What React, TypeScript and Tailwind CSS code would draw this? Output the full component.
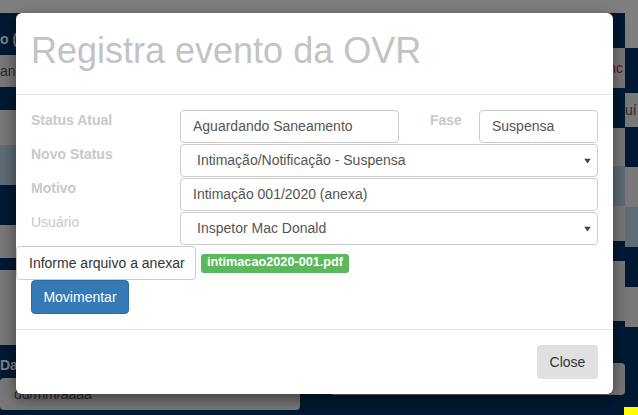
import { ReactNode } from "react";

const font = "font-['Liberation_Sans',Arial,sans-serif]";

function Arrow() {
  return (
    <svg width="7" height="5" viewBox="0 0 7 5" className="absolute right-[6px] top-1/2 -translate-y-1/2">
      <path d="M0 0 L7 0 L3.5 5 Z" fill="#444" />
    </svg>
  );
}

function Field({ children, select, className = "" }: { children: ReactNode; select?: boolean; className?: string }) {
  return (
    <div
      className={`relative flex h-[33px] items-center whitespace-nowrap rounded border border-[#ccc] bg-white text-[14px] text-[#555] ${
        select ? "pl-4" : "pl-3"
      } ${className}`}
    >
      {children}
      {select && <Arrow />}
    </div>
  );
}

function Label({ children, bold = true }: { children: ReactNode; bold?: boolean }) {
  return (
    <div className={`w-[149px] shrink-0 text-[14px] leading-[20px] text-[#c9c9c9] ${bold ? "font-bold" : ""}`}>
      {children}
    </div>
  );
}

function Background() {
  return (
    <div className="flex h-[415px] flex-col bg-[#003366]">
      <div className="h-[13px] shrink-0 bg-white" />
      <div className="grid flex-1 grid-cols-[300px_30px_295px_13px]">
        <div className="flex flex-col">
          <div className="h-[42px] pt-[16px] text-[14px] font-bold leading-[20px] text-white">o (</div>
          <div className="h-[32px] rounded-r bg-[#f0f0f0] pt-[6px] text-[14px] text-[#555]">and</div>
          <div className="h-[23px]" />
          <div className="h-[35px] bg-[#f2f2f2]" />
          <div className="h-[40px] bg-[#bcd8ea]" />
          <div className="h-[40px]" />
          <div className="h-[33px] bg-[#f2f2f2]" />
          <div className="h-[12px]" />
          <div className="h-[75px] bg-[#f2f2f2]" />
          <div className="h-[33px] pt-[10px] text-[14px] font-bold leading-[20px] text-white">Data</div>
          <div className="h-[32px] rounded bg-[#f0f0f0] pl-[14px] pt-[6px] text-[14px] text-[#555]">dd/mm/aaaa</div>
        </div>
        <div />
        <div className="flex flex-col">
          <div className="h-[35px]" />
          <div className="h-[40px] bg-[#f2f2f2] pr-[2px] pt-[10px] text-right text-[14px] text-[#a33]">nc</div>
          <div className="h-[40px]" />
          <div className="h-[38px] bg-[#f2f2f2]" />
          <div className="h-[40px] bg-[#bcd8ea]" />
          <div className="h-[35px] bg-[#f2f2f2]" />
          <div className="h-[20px]" />
          <div className="h-[60px] bg-[#f2f2f2]" />
          <div className="h-[42px]" />
          <div className="h-[32px] rounded bg-[#f0f0f0] pl-[12px] pt-[6px] text-[14px] text-[#555]">Inspetor Mac Donald</div>
        </div>
        <div className="flex flex-col">
          <div className="h-[35px] bg-white" />
          <div className="h-[45px]" />
          <div className="h-[34px] overflow-hidden bg-[#f2f2f2] pt-[7px] text-[14px] text-[#555]">uí</div>
          <div className="h-[40px]" />
          <div className="h-[40px] bg-[#f2f2f2]" />
          <div className="h-[40px] bg-[#bcd8ea]" />
          <div className="h-[40px]" />
          <div className="h-[40px] bg-[#f2f2f2]" />
        </div>
      </div>
    </div>
  );
}

export default function App() {
  return (
    <div className={`relative h-[415px] w-[638px] overflow-hidden ${font}`}>
      <Background />
      <div className="absolute inset-0 bg-black/50" />
      <div className="absolute bottom-0 right-0 h-[8px] w-[14px] bg-[#ffff00]" />

      <div className="absolute left-[16px] top-[13px] w-[597px] rounded-md bg-white shadow-[0_5px_15px_rgba(0,0,0,0.5)]">
        <div className="border-b border-[#e5e5e5] px-[15px] pb-[23px] pt-[18px]">
          <h1 className="text-[36px] font-normal leading-[40px] text-[#c3c3c3]">Registra evento da OVR</h1>
        </div>

        <div className="p-[15px]">
          <div className="flex h-[34px]">
            <Label>Status Atual</Label>
            <Field className="w-[219px]">Aguardando Saneamento</Field>
            <div className="w-[80px] pl-[31px] text-[14px] font-bold leading-[20px] text-[#c9c9c9]">Fase</div>
            <Field className="w-[119px]">Suspensa</Field>
          </div>
          <div className="flex h-[34px]">
            <Label>Novo Status</Label>
            <Field select className="w-[418px]">Intimação/Notificação - Suspensa</Field>
          </div>
          <div className="flex h-[34px]">
            <Label>Motivo</Label>
            <Field className="w-[418px]">Intimação 001/2020 (anexa)</Field>
          </div>
          <div className="flex h-[34px]">
            <Label bold={false}>Usuário</Label>
            <Field select className="w-[418px]">Inspetor Mac Donald</Field>
          </div>

          <div className="-ml-[15px] flex h-[34px] items-center gap-[5px]">
            <button className="h-[34px] w-[180px] whitespace-nowrap rounded border border-[#ccc] bg-white px-3 text-left text-[14px] text-[#333]">
              Informe arquivo a anexar
            </button>
            <span className="flex h-[19px] items-center whitespace-nowrap rounded-[3px] bg-[#5cb85c] px-[6px] text-[12.7px] font-bold text-white">
              intimacao2020-001.pdf
            </span>
          </div>

          <button className="h-[34px] w-[98px] rounded border border-[#2e6da4] bg-[#337ab7] text-[14px] text-white">
            Movimentar
          </button>
        </div>

        <div className="flex justify-end border-t border-[#e5e5e5] p-[15px]">
          <button className="h-[34px] w-[61px] rounded bg-[#e0e0e0] text-[14px] text-[#333]">Close</button>
        </div>
      </div>
    </div>
  );
}
